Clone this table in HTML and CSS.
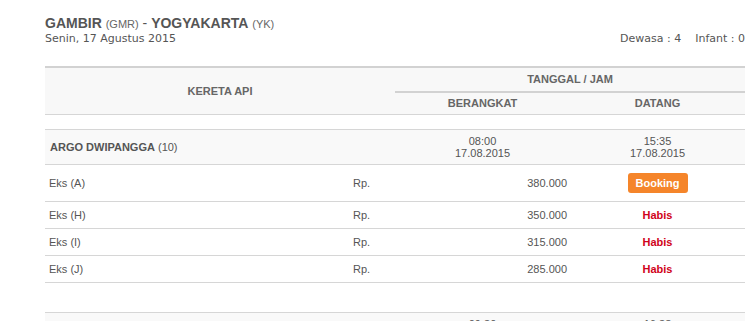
FILE: index.html
```html
<!DOCTYPE html>
<html>
<head>
<meta charset="utf-8">
<link rel="stylesheet" href="styles.css">
</head>
<body>
<div class="wrap">
  <div class="top">
    <div>
      <div class="route"><b>GAMBIR</b> <small>(GMR)</small> - <b>YOGYAKARTA</b> <small>(YK)</small></div>
      <div class="date">Senin, 17 Agustus 2015</div>
    </div>
    <div class="pax"><span>Dewasa : 4</span><span class="inf">Infant : 0</span></div>
  </div>
  <table class="sched">
    <colgroup><col class="c1"><col class="c2"><col class="c3"><col class="c4"></colgroup>
    <thead>
      <tr>
        <th class="h-train" rowspan="2" colspan="2">KERETA API</th>
        <th class="h-group" colspan="2">TANGGAL / JAM</th>
      </tr>
      <tr>
        <th class="h-sub">BERANGKAT</th>
        <th class="h-sub">DATANG</th>
      </tr>
    </thead>
    <tbody>
      <tr class="spacer"><td colspan="4"></td></tr>
      <tr class="train">
        <td colspan="2" class="tname"><b>ARGO DWIPANGGA</b> (10)</td>
        <td class="time">08:00<br>17.08.2015</td>
        <td class="time">15:35<br>17.08.2015</td>
      </tr>
      <tr class="cls first">
        <td class="cname">Eks (A)</td>
        <td class="rp">Rp.</td>
        <td class="amt">380.000</td>
        <td class="act"><button class="book">Booking</button></td>
      </tr>
      <tr class="cls">
        <td class="cname">Eks (H)</td>
        <td class="rp">Rp.</td>
        <td class="amt">350.000</td>
        <td class="act"><span class="habis">Habis</span></td>
      </tr>
      <tr class="cls">
        <td class="cname">Eks (I)</td>
        <td class="rp">Rp.</td>
        <td class="amt">315.000</td>
        <td class="act"><span class="habis">Habis</span></td>
      </tr>
      <tr class="cls">
        <td class="cname">Eks (J)</td>
        <td class="rp">Rp.</td>
        <td class="amt">285.000</td>
        <td class="act"><span class="habis">Habis</span></td>
      </tr>
      <tr class="gap"><td colspan="4"></td></tr>
      <tr class="train">
        <td colspan="2" class="tname"><b>ARGO LAWU</b> (8)</td>
        <td class="time">09:30<br>17.08.2015</td>
        <td class="time">16:38<br>17.08.2015</td>
      </tr>
    </tbody>
  </table>
</div>
</body>
</html>
```
FILE: styles.css
```css
html, body {
  margin: 0;
  padding: 0;
  background: #fff;
}
body {
  font-family: "Liberation Sans", Arial, sans-serif;
  color: #555;
  overflow: hidden;
}
.wrap {
  width: 700px;
  padding: 14px 0 0 45px;
}
.top {
  display: flex;
  justify-content: space-between;
  align-items: flex-end;
  margin-bottom: 20px;
}
.route {
  font-size: 14px;
  line-height: 18px;
  height: 18px;
  color: #555;
}
.route b {
  font-weight: bold;
}
.route small {
  font-size: 11px;
  line-height: 10px;
  color: #666;
}
.date, .pax {
  font-family: "DejaVu Sans", Verdana, sans-serif;
  font-size: 11px;
  line-height: 14px;
  color: #555;
}
.pax .inf {
  margin-left: 14px;
}
.sched {
  width: 700px;
  border-collapse: separate;
  border-spacing: 0;
  table-layout: fixed;
  font-size: 11px;
}
.c1 { width: 300px; }
.c2 { width: 50px; }
.c3 { width: 175px; }
.c4 { width: 175px; }
.sched th {
  background: #f8f8f8;
  color: #666;
  font-weight: bold;
  font-size: 11px;
  line-height: 13px;
  text-align: center;
  padding: 0;
}
.h-train {
  border-top: 2px solid #d2d2d2;
  border-bottom: 1px solid #d6d6d6;
}
.h-group {
  border-top: 2px solid #d2d2d2;
  border-bottom: 2px solid #d2d2d2;
  padding: 5px 0 !important;
}
.h-sub {
  padding: 4px 0 !important;
  border-bottom: 1px solid #d6d6d6;
}
.spacer td {
  height: 14px;
  padding: 0;
}
.sched td {
  padding: 0;
  color: #555;
}
.train td {
  background: #f9f9f9;
  border-top: 1px solid #d6d6d6;
  border-bottom: 1px solid #d6d6d6;
  padding: 5px 0;
  line-height: 12px;
  vertical-align: middle;
}
.tname {
  padding-left: 5px !important;
  color: #555;
}
.tname b {
  font-weight: bold;
}
.time {
  text-align: center;
}
.cls td {
  border-bottom: 1px solid #d6d6d6;
  padding: 6px 0;
  line-height: 14px;
  vertical-align: middle;
}
.cls.first td {
  padding: 8px 0;
  line-height: 20px;
}
.cname {
  padding-left: 4px !important;
}
.rp {
  padding-left: 8px !important;
}
.amt {
  text-align: right;
  padding-right: 3px !important;
}
.act {
  text-align: center;
}
.book {
  display: block;
  margin: 0 auto;
  height: 20px;
  padding: 0 8px;
  border: 0;
  border-radius: 3px;
  background: #f5852a;
  color: #fff;
  font-family: "Liberation Sans", Arial, sans-serif;
  font-size: 11px;
  font-weight: bold;
  line-height: 20px;
}
.habis {
  color: #d0021b;
  font-weight: bold;
}
.gap td {
  height: 29px;
  padding: 0;
}
```
